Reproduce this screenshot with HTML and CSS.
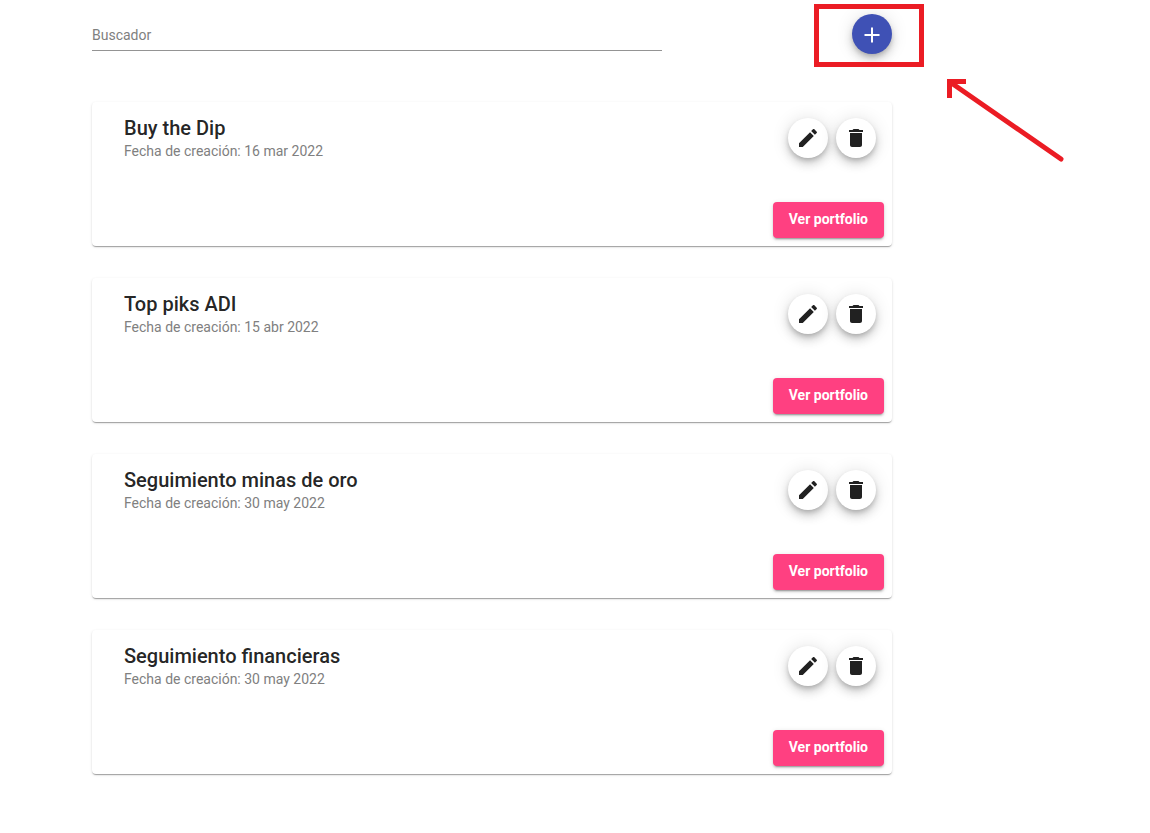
FILE: index.html
```html
<!DOCTYPE html>
<html lang="es">
<head>
  <meta charset="UTF-8">
  <meta name="viewport" content="width=device-width, initial-scale=1.0">
  <title>Portfolios</title>
  <link rel="stylesheet" href="styles.css">
</head>
<body>

  <svg class="sprite" aria-hidden="true">
    <symbol id="icon-add" viewBox="0 0 24 24"><path d="M19.500 14H13v6.500h-2V14H4.500v-2H11V5.500h2V12h6.500v2z"/></symbol>
    <symbol id="icon-edit" viewBox="0 0 24 24"><path d="M3 17.25V21h3.75L17.81 9.94l-3.75-3.75L3 17.25zM20.71 7.04c.39-.39.39-1.02 0-1.41l-2.34-2.34c-.39-.39-1.02-.39-1.41 0l-1.83 1.83 3.75 3.75 1.83-1.83z"/></symbol>
    <symbol id="icon-delete" viewBox="0 0 24 24"><path d="M6 19c0 1.100.9 2 2 2h8c1.100 0 2-.9 2-2V7H6v12zM19 4h-3.500l-1-1h-5l-1 1H5v2h14V4z"/></symbol>
  </svg>

  <main class="container">

    <div class="toolbar">
      <input class="search" type="text" placeholder="Buscador" aria-label="Buscador">
      <div class="add">
        <button class="fab primary" type="button" aria-label="Nuevo portfolio"><svg><use href="#icon-add"/></svg></button>
        <div class="highlight"></div>
        <svg class="arrow" viewBox="0 0 118 84" aria-hidden="true">
          <path d="M3 3L114 80" stroke-linecap="round"/>
          <path d="M19 2.500H2.500V19"/>
        </svg>
      </div>
    </div>

    <section class="card">
      <div class="card-header">
        <div class="card-text">
          <h2>Buy the Dip</h2>
          <p>Fecha de creación: 16 mar 2022</p>
        </div>
        <button class="fab" type="button" aria-label="Editar"><svg><use href="#icon-edit"/></svg></button>
        <button class="fab" type="button" aria-label="Eliminar"><svg><use href="#icon-delete"/></svg></button>
      </div>
      <div class="card-actions"><button class="btn" type="button">Ver portfolio</button></div>
    </section>

    <section class="card">
      <div class="card-header">
        <div class="card-text">
          <h2>Top piks ADI</h2>
          <p>Fecha de creación: 15 abr 2022</p>
        </div>
        <button class="fab" type="button" aria-label="Editar"><svg><use href="#icon-edit"/></svg></button>
        <button class="fab" type="button" aria-label="Eliminar"><svg><use href="#icon-delete"/></svg></button>
      </div>
      <div class="card-actions"><button class="btn" type="button">Ver portfolio</button></div>
    </section>

    <section class="card">
      <div class="card-header">
        <div class="card-text">
          <h2>Seguimiento minas de oro</h2>
          <p>Fecha de creación: 30 may 2022</p>
        </div>
        <button class="fab" type="button" aria-label="Editar"><svg><use href="#icon-edit"/></svg></button>
        <button class="fab" type="button" aria-label="Eliminar"><svg><use href="#icon-delete"/></svg></button>
      </div>
      <div class="card-actions"><button class="btn" type="button">Ver portfolio</button></div>
    </section>

    <section class="card">
      <div class="card-header">
        <div class="card-text">
          <h2>Seguimiento financieras</h2>
          <p>Fecha de creación: 30 may 2022</p>
        </div>
        <button class="fab" type="button" aria-label="Editar"><svg><use href="#icon-edit"/></svg></button>
        <button class="fab" type="button" aria-label="Eliminar"><svg><use href="#icon-delete"/></svg></button>
      </div>
      <div class="card-actions"><button class="btn" type="button">Ver portfolio</button></div>
    </section>

  </main>

</body>
</html>
```
FILE: styles.css
```css
* {
  box-sizing: border-box;
}
body {
  font-family: Roboto, sans-serif;
  margin: 0;
  background-color: #fff;
  color: rgba(0,0,0,0.87);
}
.sprite {
  display: none;
}
.container {
  max-width: 800px;
  margin: 0 92px;
  padding: 14px 0 24px;
}
.toolbar {
  display: flex;
  justify-content: space-between;
  margin-bottom: 48px;
}
.search {
  flex: 0 1 570px;
  min-width: 0;
  height: 37px;
  padding: 6px 0 0;
  border: 0;
  border-bottom: 1px solid #949494;
  background: none;
  font: 14px Roboto, sans-serif;
  color: inherit;
}
.search::placeholder {
  color: #808080;
  opacity: 1;
}
.add {
  position: relative;
}
.fab {
  display: flex;
  align-items: center;
  justify-content: center;
  width: 40px;
  height: 40px;
  padding: 0;
  border: 0;
  border-radius: 50%;
  background-color: #fff;
  color: #212121;
  cursor: pointer;
  box-shadow: 0 3px 5px -1px rgba(0,0,0,0.2), 0 6px 10px 0 rgba(0,0,0,0.14), 0 1px 18px 0 rgba(0,0,0,0.12);
}
.fab svg {
  width: 24px;
  height: 24px;
  fill: currentColor;
}
.fab.primary {
  background-color: #3f51b5;
  color: #fff;
}
/* marks the add button */
.highlight {
  position: absolute;
  top: -10px;
  left: -38px;
  width: 110px;
  height: 63px;
  border: 5px solid #eb1c24;
  pointer-events: none;
}
.arrow {
  position: absolute;
  top: 65px;
  left: 95px;
  width: 118px;
  height: 84px;
  fill: none;
  stroke: #eb1c24;
  stroke-width: 5px;
  pointer-events: none;
}
.card {
  margin-bottom: 32px;
  border-radius: 4px;
  background-color: #fff;
  box-shadow: 0 2px 1px -1px rgba(0,0,0,0.2), 0 1px 1px 0 rgba(0,0,0,0.14), 0 1px 3px 0 rgba(0,0,0,0.12);
}
.card-header {
  display: flex;
  gap: 8px;
  height: 100px;
  padding: 16px 16px 0;
}
.card-text {
  flex: 1;
  padding-left: 16px;
}
.card-text h2 {
  margin: 0 0 2px;
  font-size: 20px;
  font-weight: 500;
  line-height: 20px;
}
.card-text p {
  margin: 0;
  font-size: 14px;
  line-height: 22px;
  color: #808080;
}
.card-actions {
  display: flex;
  justify-content: flex-end;
  padding: 0 8px 8px;
}
.btn {
  height: 36px;
  padding: 0 16px 2px;
  border: 0;
  border-radius: 4px;
  background-color: #ff4081;
  color: #fff;
  font: 700 14px Roboto, sans-serif;
  cursor: pointer;
  box-shadow: 0 3px 1px -2px rgba(0,0,0,0.2), 0 2px 2px 0 rgba(0,0,0,0.14), 0 1px 5px 0 rgba(0,0,0,0.12);
}
```
